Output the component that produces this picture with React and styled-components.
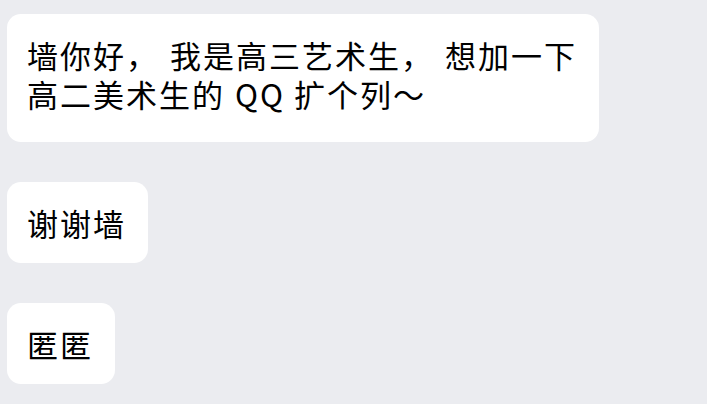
import React from "react";
import styled, { createGlobalStyle } from "styled-components";

const Global = createGlobalStyle`
  html, body {
    margin: 0;
    padding: 0;
    background: #ebecf0;
  }
  body {
    width: 707px;
    height: 404px;
    overflow: hidden;
    font-family: "Noto Sans CJK SC", "Noto Sans", sans-serif;
  }
`;

const Thread = styled.div`
  display: flex;
  flex-direction: column;
  align-items: flex-start;
  gap: 40px;
  padding: 14px 0 0 7px;
  box-sizing: border-box;
  width: 707px;
  height: 404px;
  background: #ebecf0;
`;

const Bubble = styled.div`
  background: #ffffff;
  border-radius: 14px;
  padding: 21px 22px ${(p) => (p.$extraBottom ? 29 : 21)}px 20px;
  font-size: 31px;
  font-weight: 400;
  line-height: 39px;
  letter-spacing: 2px;
  color: #000000;
  white-space: nowrap;
`;

const Punct = styled.span`
  margin-right: 11px;
`;

const Latin = styled.span`
  letter-spacing: 2px;
  margin: 0 9px 0 10px;
`;

export default function App() {
  return (
    <>
      <Global />
      <Thread>
        <Bubble $extraBottom>
          墙你好<Punct>，</Punct>我是高三艺术生<Punct>，</Punct>想加一下
          <br />
          高二美术生的<Latin>QQ</Latin>扩个列～
        </Bubble>
        <Bubble>谢谢墙</Bubble>
        <Bubble>匿匿</Bubble>
      </Thread>
    </>
  );
}
